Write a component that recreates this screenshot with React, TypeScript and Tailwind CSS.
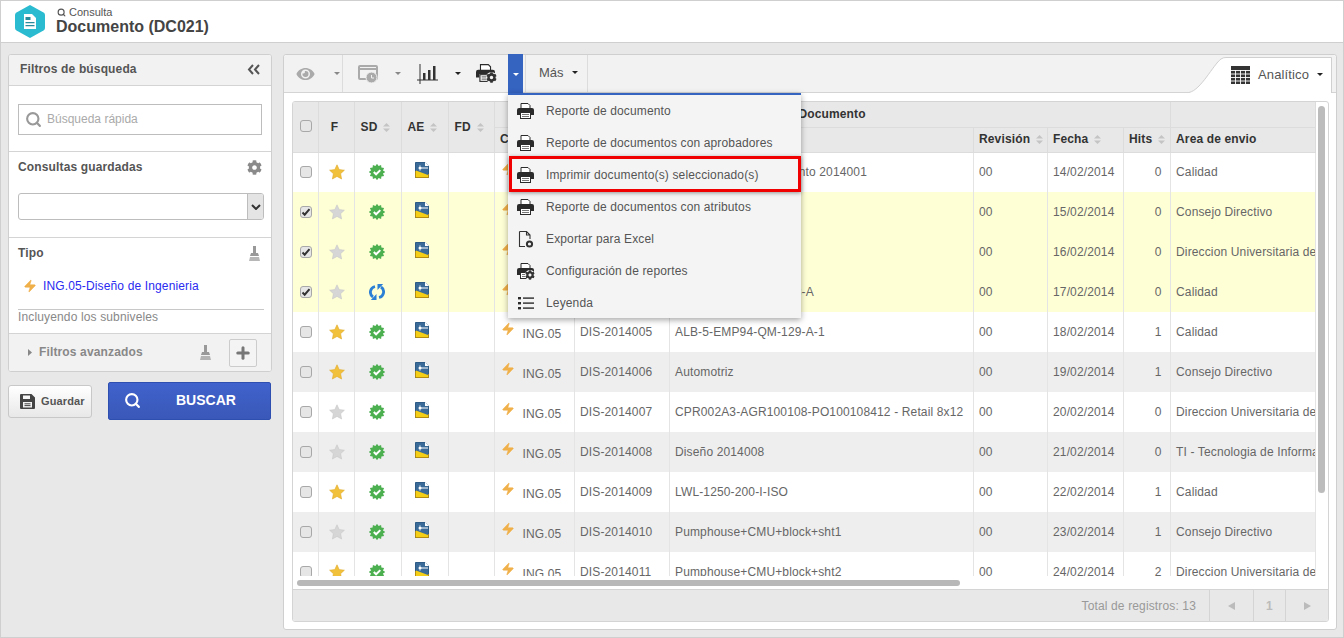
import { FaCog, FaEye } from "react-icons/fa";
import { Search, Zap, Plus } from "lucide-react";

const rows = [
  { id: "DIS-2014001", title: "Manual del procedimiento 2014001", date: "14/02/2014", hits: 0, area: "Calidad", fav: true, sync: false, sel: false },
  { id: "DIS-2014002", title: "Plano 2014002", date: "15/02/2014", hits: 0, area: "Consejo Directivo", fav: false, sync: false, sel: true },
  { id: "DIS-2014003", title: "Plano 2014003", date: "16/02/2014", hits: 0, area: "Direccion Universitaria de Ingenieria", fav: false, sync: false, sel: true },
  { id: "DIS-2014004", title: "ALB-5-EMP94-QM-128-A", date: "17/02/2014", hits: 0, area: "Calidad", fav: false, sync: true, sel: true },
  { id: "DIS-2014005", title: "ALB-5-EMP94-QM-129-A-1", date: "18/02/2014", hits: 1, area: "Calidad", fav: true, sync: false, sel: false },
  { id: "DIS-2014006", title: "Automotriz", date: "19/02/2014", hits: 1, area: "Consejo Directivo", fav: true, sync: false, sel: false },
  { id: "DIS-2014007", title: "CPR002A3-AGR100108-PO100108412 - Retail 8x12", date: "20/02/2014", hits: 0, area: "Direccion Universitaria de Ingenieria", fav: false, sync: false, sel: false },
  { id: "DIS-2014008", title: "Diseño 2014008", date: "21/02/2014", hits: 0, area: "TI - Tecnologia de Informacion", fav: false, sync: false, sel: false },
  { id: "DIS-2014009", title: "LWL-1250-200-I-ISO", date: "22/02/2014", hits: 1, area: "Calidad", fav: true, sync: false, sel: false },
  { id: "DIS-2014010", title: "Pumphouse+CMU+block+sht1", date: "23/02/2014", hits: 1, area: "Consejo Directivo", fav: false, sync: false, sel: false },
  { id: "DIS-2014011", title: "Pumphouse+CMU+block+sht2", date: "24/02/2014", hits: 2, area: "Direccion Universitaria de Ingenieria", fav: true, sync: false, sel: false },
];

// 12 toothed badge outline
const burst = Array.from({ length: 24 }, (_, i) => {
  const r = i % 2 === 0 ? 8.2 : 6.2;
  const a = (i * Math.PI) / 12;
  return `${(8 + r * Math.sin(a)).toFixed(2)},${(8 - r * Math.cos(a)).toFixed(2)}`;
}).join(" ");

function Printer({ className = "w-[17px] h-[16px]" }: { className?: string }) {
  return (
    <svg viewBox="0 0 17 16" className={className}>
      <path d="M4 .5h7l2 2V6H4z" fill="#fff" stroke="#2b2b2b" />
      <path d="M2 5h13a2 2 0 0 1 2 2v5h-3V9H3v3H0V7a2 2 0 0 1 2-2z" fill="#2b2b2b" />
      <rect x="3.500" y="9.500" width="10" height="6" fill="#fff" stroke="#2b2b2b" />
      <path d="M5 11.500h7M5 13.500h7" stroke="#777" />
    </svg>
  );
}

function PrinterGear() {
  return (
    <span className="relative block w-[21px] h-[19px]">
      <Printer className="w-[19px] h-[18px]" />
      <FaCog className="absolute right-0 bottom-0 w-[11px] h-[11px] text-[#333] bg-[#f2f2f2] rounded-full" />
    </span>
  );
}

function Broom({ color = "#999" }: { color?: string }) {
  return (
    <svg viewBox="0 0 11 15" className="w-[11px] h-[15px]">
      <rect x="4" y="0" width="3" height="7" fill={color} />
      <path d="M2 7h7l1 3H1z" fill={color} />
      <path d="M1 11h9l1 4H0z" fill={color} opacity="0.7" />
    </svg>
  );
}

function Star({ on }: { on: boolean }) {
  return (
    <svg viewBox="0 0 16 16" className="w-4 h-4">
      <polygon
        points="8,0.800 10.200,5.600 15.400,6.200 11.600,9.700 12.600,15 8,12.400 3.400,15 4.400,9.700 0.600,6.200 5.800,5.600"
        fill={on ? "#f2c13c" : "#d6d6d6"}
        stroke={on ? "#dfa92c" : "#c8c8c8"}
        strokeWidth="0.6"
      />
    </svg>
  );
}

function Verified() {
  return (
    <svg viewBox="0 0 16 16" className="w-4 h-4">
      <polygon points={burst} fill="#4caf50" />
      <path d="M4.800 8l2.300 2.300 4.200-4.200" fill="none" stroke="#fff" strokeWidth="2" />
    </svg>
  );
}

function Sync() {
  return (
    <svg viewBox="0 0 16 16" className="w-4 h-4" fill="none" stroke="#2b7fd4" strokeWidth="2.800">
      <path d="M6 2.500A5.800 5.800 0 0 0 4 13" />
      <path d="M10 13.500A5.800 5.800 0 0 0 12 3" />
      <path d="M7.500 10v6H1.800z" fill="#2b7fd4" stroke="none" />
      <path d="M8.500 6V0h5.700z" fill="#2b7fd4" stroke="none" />
    </svg>
  );
}

function DocIcon() {
  return (
    <svg viewBox="0 0 14 16" className="w-[14px] h-4">
      <path d="M.5.5h9.500l3.500 3.500v11.500H.5z" fill="#3a6b98" stroke="#2d5b85" />
      <path d="M1 8.500l12 4.500v2H1z" fill="#f5cf16" />
      <path d="M10 0v4h4z" fill="#fff" />
      <path d="M1 15.500h12.500M13.500 12v3.500M.5 9v6.500" stroke="#b58c12" />
      <path d="M5 6h8" stroke="#fff" />
      <path d="M5 3v6" stroke="#cfe0ee" strokeWidth="0.7" />
      <circle cx="5" cy="6" r="1.500" fill="#fff" />
    </svg>
  );
}

function Box({ on = false }: { on?: boolean }) {
  return (
    <span className="flex w-3 h-3 -mt-[1px] items-center justify-center rounded-[3px] border border-[#a8a8a8] bg-[#e6e6e6]">
      {on && (
        <svg viewBox="0 0 10 10" className="w-[10px] h-[10px]">
          <path d="M1.500 5.500l2.200 2.200L8.500 2.200" fill="none" stroke="#333" strokeWidth="2" />
        </svg>
      )}
    </span>
  );
}

function Sort() {
  return (
    <svg viewBox="0 0 7 9" className="inline-block w-[7px] h-[9px] ml-[6px]">
      <path d="M3.500 0L7 3.400H0zM3.500 9L0 5.600h7z" fill="#c4c4c4" />
    </svg>
  );
}

function Caret({ color = "#222" }: { color?: string }) {
  return (
    <svg viewBox="0 0 6 3" className="w-[6px] h-[3px]">
      <path d="M0 0h6L3 3z" fill={color} />
    </svg>
  );
}

const thBase = "border-r border-b border-[#dcdcdc] bg-[#e8e8e8] text-[12px] font-bold text-[#333] whitespace-nowrap overflow-hidden";
const th = thBase + " text-left pl-[6px]";
const thLow = thBase + " text-left pl-[5.500px] pb-[2px]";
const cell = "border-r border-[#e4e4e4] whitespace-nowrap overflow-hidden";
const td = cell + " px-[5.500px]";

const menu = [
  { label: "Reporte de documento", icon: <Printer /> },
  { label: "Reporte de documentos con aprobadores", icon: <Printer /> },
  { label: "Imprimir documento(s) seleccionado(s)", icon: <Printer />, mark: true },
  { label: "Reporte de documentos con atributos", icon: <Printer /> },
  {
    label: "Exportar para Excel",
    icon: (
      <svg viewBox="0 0 16 17" className="w-4 h-[17px]" fill="none" stroke="#333">
        <path d="M1.500.5h7l3.500 3.500v4M8.500.5V4H12M7 15.500H1.500V.5" strokeWidth="1.100" />
        <circle cx="11.500" cy="13" r="2.600" strokeWidth="2" />
      </svg>
    ),
  },
  {
    label: "Configuración de reportes",
    icon: (
      <span className="relative block w-[17px] h-4">
        <Printer />
        <FaCog className="absolute -right-[1px] -bottom-[1px] w-[10px] h-[10px] text-[#333] bg-[#f4f4f4] rounded-full" />
      </span>
    ),
  },
  {
    label: "Leyenda",
    icon: (
      <svg viewBox="0 0 16 14" className="w-4 h-[14px]" fill="#2b2b2b">
        <rect x="0" y="1" width="3" height="2.400" />
        <rect x="0" y="6" width="3" height="2.400" />
        <rect x="0" y="11" width="3" height="2.400" />
        <rect x="5" y="1.400" width="11" height="1.400" />
        <rect x="5" y="6.400" width="11" height="1.400" />
        <rect x="5" y="11.400" width="11" height="1.400" />
      </svg>
    ),
  },
];

export default function App() {
  return (
    <div className="w-[1344px] h-[638px] overflow-hidden flex flex-col bg-[#e8e8e8] border border-[#cfcfcf] font-['Liberation_Sans',Arial,sans-serif] text-[12px] tracking-[0.14px] text-[#666]">
      <header className="h-[42px] shrink-0 bg-white border-b border-[#cfcfcf] flex items-center pl-[14px]">
        <svg viewBox="0 0 30 33" className="w-[30px] h-[33px]">
          <path d="M15 0l13.500 7.500a3 3 0 0 1 1.500 2.500v13a3 3 0 0 1-1.500 2.500L15 33 1.500 25.500A3 3 0 0 1 0 23V10a3 3 0 0 1 1.500-2.500z" fill="#2abbd0" />
          <path d="M9 9h8l4 4v11H9z" fill="#fff" />
          <path d="M10.500 12h5v3h-5zM10.500 17h9v1.200h-9zM10.500 20h9v1.200h-9z" fill="#2a8c9c" />
        </svg>
        <div className="ml-[11px]">
          <div className="flex items-center gap-[3px] text-[11px] leading-[11px] tracking-normal text-[#555]">
            <Search className="w-[9px] h-[9px] ml-[1px]" strokeWidth={3} />
            Consulta
          </div>
          <div className="text-[16px] leading-[18px] font-bold tracking-normal text-[#444]">Documento (DC021)</div>
        </div>
      </header>

      <div className="flex flex-1 pt-[11px] pl-[7px]">
        <aside className="w-[264px] shrink-0">
          <div className="h-[318px] bg-white border border-[#cfcfcf] rounded-[3px] overflow-hidden flex flex-col">
            <div className="h-[31px] shrink-0 bg-[#f2f2f2] border-b border-[#d4d4d4] flex items-center justify-between pl-[11px] pr-[11px] pb-[2px]">
              <span className="font-bold text-[#555]">Filtros de búsqueda</span>
              <svg viewBox="0 0 13 11" className="w-[13px] h-[11px]" fill="none" stroke="#555" strokeWidth="2">
                <path d="M6 1L2 5.500 6 10M12 1L8 5.500 12 10" />
              </svg>
            </div>
            <div className="h-[66px] shrink-0 border-b border-[#d4d4d4] px-[9px] pt-[2px] flex items-center">
              <div className="w-[246px] h-[31px] border border-[#bdbdbd] flex items-center pl-[6px] gap-[5px] text-[#aaa] tracking-normal">
                <Search className="w-[17px] h-[17px] text-[#999]" strokeWidth={3} />
                <span className="-mt-[2px]">Búsqueda rápida</span>
              </div>
            </div>
            <div className="h-[86px] shrink-0 border-b border-[#d4d4d4] px-[9px] pt-[7px]">
              <div className="flex items-center justify-between h-[16px]">
                <span className="font-bold text-[#555]">Consultas guardadas</span>
                <FaCog className="w-[15px] h-[15px] text-[#8a8a8a]" />
              </div>
              <div className="mt-[18px] w-[246px] h-[27px] border border-[#bdbdbd] rounded-[3px] flex justify-end overflow-hidden">
                <span className="w-[16px] border-l border-[#bdbdbd] bg-[#e4e4e4] flex items-center justify-center">
                  <svg viewBox="0 0 10 6" className="w-[10px] h-[6px]" fill="none" stroke="#333" strokeWidth="2">
                    <path d="M1 1l4 4 4-4" />
                  </svg>
                </span>
              </div>
            </div>
            <div className="flex-1 px-[9px] pt-[7px]">
              <div className="flex items-center justify-between h-[16px] pr-[2px]">
                <span className="font-bold text-[#555]">Tipo</span>
                <Broom />
              </div>
              <div className="flex items-center h-[30px] mt-[10px] pl-[5px] gap-[6px] text-[#2a2af0]">
                <Zap className="w-[14px] h-[16px] text-[#f0b04a] fill-[#f0b04a]" strokeWidth={1} />
                ING.05-Diseño de Ingenieria
              </div>
              <div className="mt-[8px] w-[246px] border-t border-[#c8c8c8] h-[17px] leading-[15px] text-[#888]">
                Incluyendo los subniveles
              </div>
            </div>
            <div className="h-[38px] shrink-0 bg-[#f2f2f2] border-t border-[#d4d4d4] flex items-center pl-[19px] pr-[14px]">
              <svg viewBox="0 0 4 7" className="w-[4px] h-[7px]">
                <path d="M0 0l4 3.500L0 7z" fill="#888" />
              </svg>
              <span className="ml-[7px] -mt-[2px] font-bold text-[#888]">Filtros avanzados</span>
              <span className="ml-auto">
                <Broom />
              </span>
              <span className="ml-[18px] w-[28px] h-[28px] border border-[#ccc] rounded-[2px] bg-[#f4f4f4] flex items-center justify-center">
                <Plus className="w-[18px] h-[18px] text-[#777]" strokeWidth={4} />
              </span>
            </div>
          </div>
          <div className="mt-[10px] flex items-center">
            <button className="w-[84px] h-[33px] mt-[1px] border border-[#c8c8c8] rounded-[3px] bg-gradient-to-b from-white to-[#e8e8e8] flex items-center pl-[11px] gap-[6px] text-[11px] font-bold text-[#555]">
              <svg viewBox="0 0 15 15" className="w-[15px] h-[15px]" fill="#444">
                <path d="M0 1a1 1 0 0 1 1-1h10.500L15 3.500V14a1 1 0 0 1-1 1H1a1 1 0 0 1-1-1zM3 1.500V5h7V1.500zM3 8v5.500h9V8z" fillRule="evenodd" />
                <path d="M4.500 9.800h6M4.500 11.600h6" stroke="#444" />
              </svg>
              Guardar
            </button>
            <button className="ml-[16px] w-[163px] h-[38px] border border-[#2f4fb0] rounded-[2px] bg-gradient-to-b from-[#3f62cc] to-[#3a58b8] flex items-center pl-[15px] pb-[2px] text-[14px] font-bold tracking-normal text-white">
              <Search className="w-[17px] h-[17px] text-white" strokeWidth={3} />
              <span className="ml-[35px]">BUSCAR</span>
            </button>
          </div>
        </aside>

        <main className="relative ml-[11px] w-[1054px] h-[576px] bg-white border border-[#cfcfcf] rounded-[3px] flex flex-col">
          <div className="h-[38px] shrink-0 bg-[#f2f2f2] border-b border-[#d4d4d4] flex items-stretch rounded-t-[3px]">
            <div className="flex items-center w-[59px] pl-[11px] border-r border-[#dcdcdc]">
              <FaEye className="w-[21px] h-[16px] text-[#aaa]" />
              <span className="ml-[18px]">
                <Caret color="#888" />
              </span>
            </div>
            <div className="flex items-center w-[74px] pl-[15px]">
              <svg viewBox="0 0 21 18" className="w-[21px] h-[18px]">
                <rect x="1" y="1" width="18" height="13" rx="1" fill="none" stroke="#aaa" strokeWidth="2" />
                <path d="M1 3h18v2H1z" fill="#aaa" />
                <circle cx="13.500" cy="12.500" r="5.500" fill="#aaa" stroke="#f2f2f2" />
                <path d="M13.500 10v3H16" fill="none" stroke="#f2f2f2" />
              </svg>
              <span className="ml-[16px]">
                <Caret color="#888" />
              </span>
            </div>
            <div className="flex items-center w-[59px]">
              <svg viewBox="0 0 21 20" className="w-[21px] h-[20px]">
                <path d="M3 0v20M0 16h21" stroke="#333" strokeWidth="1" fill="none" />
                <path d="M6 9h2.500v7H6zM11 6h2.500v10H11zM16 2h2.500v14H16z" fill="#333" />
              </svg>
              <span className="ml-[17px]">
                <Caret />
              </span>
            </div>
            <div className="flex items-center w-[32px]">
              <PrinterGear />
            </div>
            <div className="w-[15px] h-[41px] -mt-[1px] bg-[#3563c0] flex items-center justify-center">
              <Caret color="#fff" />
            </div>
            <div className="flex items-center w-[63px] ml-[2px] pl-[13px] pb-[2px] gap-[8px] border-l border-r border-[#dcdcdc] text-[13px] tracking-normal text-[#555]">
              Más
              <Caret />
            </div>
            <div className="relative ml-auto mr-[4px] w-[143px] -mb-[1px]">
              <svg viewBox="0 0 143 36" preserveAspectRatio="none" className="absolute left-0 bottom-0 w-[143px] h-[36px]">
                <path d="M0 35.500C12 33 24 8 32 2q2-1.500 5-1.500h105V36H0z" fill="#fff" />
                <path d="M0 35.500C12 33 24 8 32 2q2-1.500 5-1.500h105.500V36" fill="none" stroke="#d0d0d0" />
              </svg>
              <div className="absolute inset-0 pt-[1px] flex items-center pl-[42px] text-[13px] text-[#555]">
                <svg viewBox="0 0 19 18" className="w-[19px] h-[18px]">
                  <rect width="19" height="18" fill="#333" />
                  <path d="M0 4.500h19M0 8h19M0 11.500h19M0 15h19M4.500 4v14M9.500 4v14M14.500 4v14" stroke="#fff" strokeWidth="0.9" />
                </svg>
                <span className="ml-[8px]">Analítico</span>
                <span className="ml-[8px]">
                  <Caret />
                </span>
              </div>
            </div>
          </div>

          <div className="mt-[8px] ml-[8px] w-[1037px] h-[521px] border border-[#d4d4d4] rounded-[3px] flex flex-col overflow-hidden">
            <div className="relative h-[488px] shrink-0 border-b border-[#d4d4d4]">
              <div className="h-[474px] overflow-hidden">
                <table className="table-fixed w-[1022px] border-collapse">
                  <colgroup>
                    <col className="w-[25px]" />
                    <col className="w-[36px]" />
                    <col className="w-[47px]" />
                    <col className="w-[47px]" />
                    <col className="w-[46px]" />
                    <col className="w-[80px]" />
                    <col className="w-[95px]" />
                    <col className="w-[304px]" />
                    <col className="w-[74px]" />
                    <col className="w-[76px]" />
                    <col className="w-[47px]" />
                    <col className="w-[145px]" />
                  </colgroup>
                  <thead>
                    <tr className="h-[25px]">
                      <th rowSpan={2} className={thBase + " text-left pl-[7px]"}>
                        <Box />
                      </th>
                      <th rowSpan={2} className={thBase + " text-center pr-[3px]"}>
                        F
                      </th>
                      <th rowSpan={2} className={th}>
                        SD
                        <Sort />
                      </th>
                      <th rowSpan={2} className={th}>
                        AE
                        <Sort />
                      </th>
                      <th rowSpan={2} className={th}>
                        FD
                        <Sort />
                      </th>
                      <th colSpan={6} className={thBase + " text-center"}>
                        Documento
                      </th>
                      <th className={thBase} />
                    </tr>
                    <tr className="h-[25px]">
                      <th className={thLow}>Clase</th>
                      <th className={thLow}>Identificador</th>
                      <th className={thLow}>Título</th>
                      <th className={thLow}>
                        Revisión
                        <Sort />
                      </th>
                      <th className={thLow}>
                        Fecha
                        <Sort />
                      </th>
                      <th className={thLow}>
                        Hits
                        <Sort />
                      </th>
                      <th className={thLow}>Area de envio</th>
                    </tr>
                  </thead>
                  <tbody>
                    {rows.map((r, i) => (
                      <tr key={r.id} className={"h-10 " + (r.sel ? "bg-[#ffffd6]" : i > 4 && i % 2 === 1 ? "bg-[#eeeeee]" : "bg-white")}>
                        <td className={cell + " pl-[7px]"}>
                          <Box on={r.sel} />
                        </td>
                        <td className={cell}>
                          <span className="flex justify-center pl-[1px]">
                            <Star on={r.fav} />
                          </span>
                        </td>
                        <td className={cell}>
                          <span className="flex justify-center pr-[1px]">{r.sync ? <Sync /> : <Verified />}</span>
                        </td>
                        <td className={cell}>
                          <span className="flex justify-center pr-[5px] -mt-[4px]">
                            <DocIcon />
                          </span>
                        </td>
                        <td className={cell} />
                        <td className={cell + " pl-[6px]"}>
                          <span className="flex items-start gap-[8px]">
                            <Zap className="w-[14px] h-[18px] -mt-[2px] text-[#f0b04a] fill-[#f0b04a]" strokeWidth={1} />
                            <span className="mt-[3px]">ING.05</span>
                          </span>
                        </td>
                        <td className={td}>{r.id}</td>
                        <td className={td}>{r.title}</td>
                        <td className={td}>00</td>
                        <td className={td}>{r.date}</td>
                        <td className={cell + " pr-[8px] text-right"}>{r.hits}</td>
                        <td className={td}>{r.area}</td>
                      </tr>
                    ))}
                  </tbody>
                </table>
              </div>
              <span className="absolute right-[3px] top-[4px] w-[7px] h-[387px] rounded-full bg-[#bcbcbc]" />
              <span className="absolute left-[4px] top-[478px] w-[663px] h-[6px] rounded-full bg-[#b8b8b8]" />
            </div>
            <div className="flex-1 bg-[#e8e8e8] flex items-stretch justify-end text-[#999]">
              <span className="self-center mr-[13px]">Total de registros: 13</span>
              <span className="w-[44px] border-l border-[#d4d4d4] flex items-center justify-center">
                <svg viewBox="0 0 7 8" className="w-[7px] h-2">
                  <path d="M7 0v8L0 4z" fill="#bbb" />
                </svg>
              </span>
              <span className="w-[32px] border-l border-[#d4d4d4] flex items-center justify-center font-bold text-[#bbb]">1</span>
              <span className="w-[43px] border-l border-[#d4d4d4] flex items-center justify-center">
                <svg viewBox="0 0 7 8" className="w-[7px] h-2">
                  <path d="M0 0v8l7-4z" fill="#bbb" />
                </svg>
              </span>
            </div>
          </div>

          <div className="absolute left-[224px] top-[38px] w-[293px] h-[225px] bg-[#f4f4f4] border-t-2 border-[#3563c0] shadow-[0_2px_6px_rgba(0,0,0,0.35)] text-[#555]">
            {menu.map((m) => (
              <div key={m.label} className="relative h-8 flex items-center pl-[9px] gap-[12px]">
                <span className="w-[17px] flex justify-center">{m.icon}</span>
                {m.label}
                {m.mark && <span className="absolute left-[1px] right-0 -top-[3px] h-[36px] border-[3px] border-[#f00000] shadow-[0_1px_4px_rgba(0,0,0,0.4)]" />}
              </div>
            ))}
          </div>
        </main>
      </div>
    </div>
  );
}
